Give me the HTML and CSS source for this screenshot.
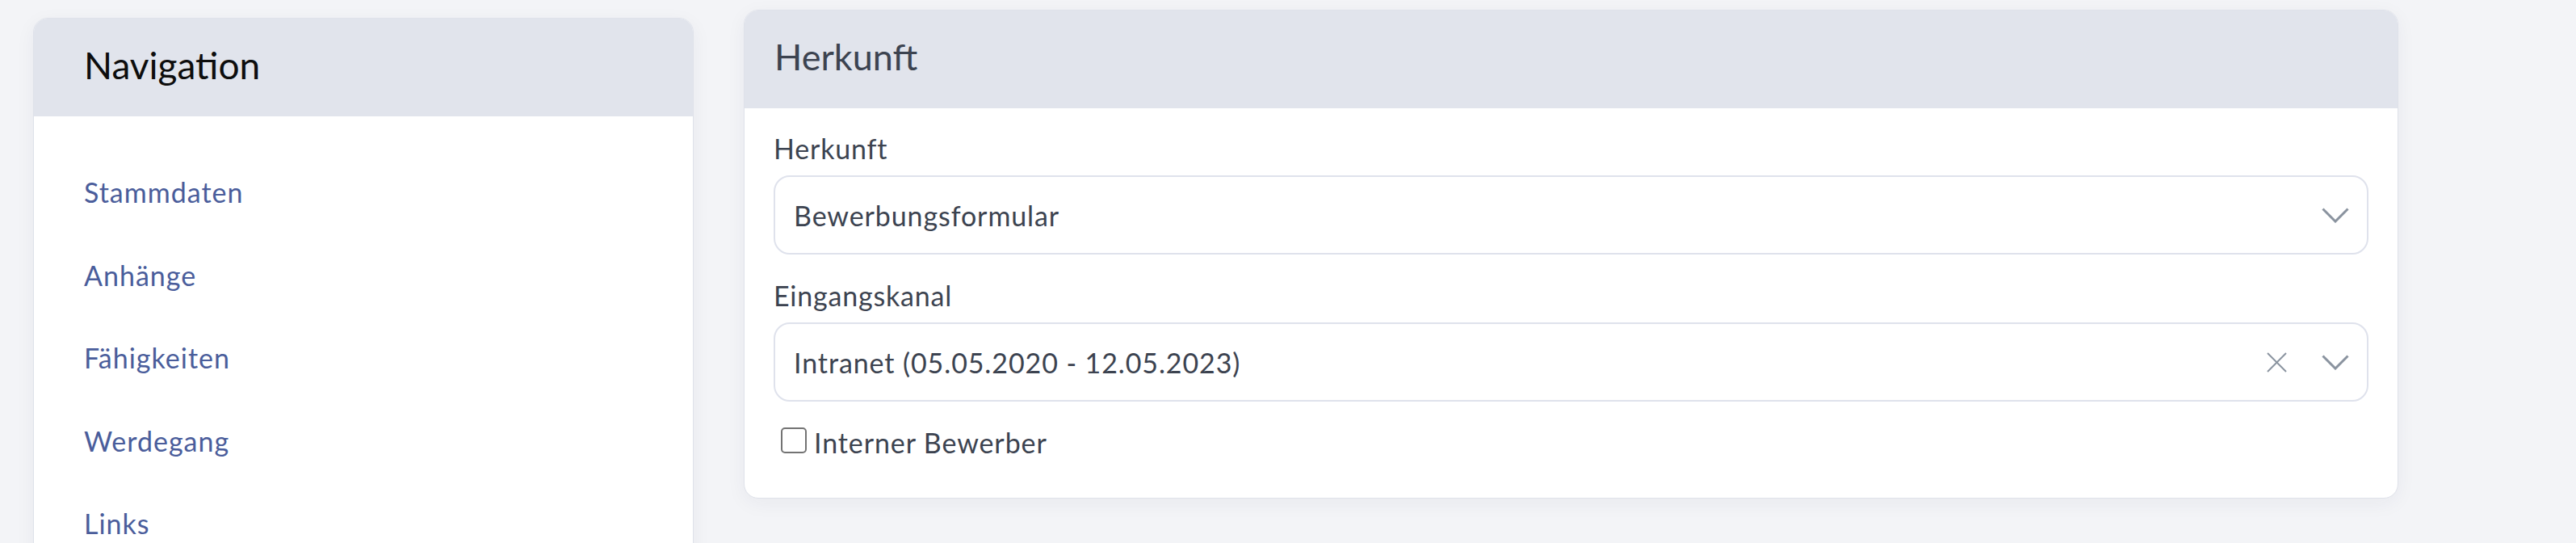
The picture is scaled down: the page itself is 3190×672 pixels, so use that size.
FILE: index.html
```html
<!DOCTYPE html>
<html lang="de">
<head>
<meta charset="utf-8"/>
<title>Bewerber – Herkunft</title>
<link rel="stylesheet" href="styles.css">
</head>
<body>
<div class="page">
  <aside class="card nav-card">
    <div class="card-header">
      <h2 class="card-title nav-title">Navigation</h2>
    </div>
    <nav class="nav-list">
      <a href="#stammdaten">Stammdaten</a>
      <a href="#anhaenge">Anhänge</a>
      <a href="#faehigkeiten">Fähigkeiten</a>
      <a href="#werdegang">Werdegang</a>
      <a href="#links">Links</a>
    </nav>
  </aside>

  <section class="card main-card">
    <div class="card-header">
      <h2 class="card-title">Herkunft</h2>
    </div>
    <div class="card-body">
      <label class="field-label">Herkunft</label>
      <div class="select">
        <span class="select-value">Bewerbungsformular</span>
        <span class="select-icons">
          <svg class="chevron" width="34" height="19" viewBox="0 0 34 19"><polyline points="1.5,1.5 17,17 32.5,1.5"/></svg>
        </span>
      </div>

      <label class="field-label">Eingangskanal</label>
      <div class="select">
        <span class="select-value">Intranet (05.05.2020 - 12.05.2023)</span>
        <span class="select-icons">
          <svg class="clear" width="25" height="25" viewBox="0 0 25 25"><line x1="1" y1="1" x2="24" y2="24"/><line x1="24" y1="1" x2="1" y2="24"/></svg>
          <svg class="chevron" width="34" height="19" viewBox="0 0 34 19"><polyline points="1.5,1.5 17,17 32.5,1.5"/></svg>
        </span>
      </div>

      <label class="check-row">
        <input type="checkbox" class="check"><span>Interner Bewerber</span>
      </label>
    </div>
  </section>
</div>
</body>
</html>
```

FILE: styles.css
```css
body {
  margin: 0;
  background: #f3f4f7;
  font-family: Lato, "Noto Sans", sans-serif;
  color: #3c4350;
}

.page {
  display: grid;
  grid-template-columns: 818px 2049px;
  column-gap: 62px;
  align-items: start;
  padding-left: 41px;
}

.card {
  background: white;
  border: 1px solid #dfe2ea;
  border-radius: 18px;
  overflow: hidden;
  box-shadow: 0 6px 24px rgba(30, 40, 70, 0.05);
}

.nav-card {
  margin-top: 22px;
}

.main-card {
  margin-top: 12px;
}

.card-header {
  background: #e1e4ec;
  padding: 30px 37px 36px;
}

.card-title {
  margin: 0;
  font-size: 45px;
  font-weight: 400;
  line-height: 55px;
  color: #3c4350;
}

.nav-card .card-header {
  padding-left: 62px;
}

.nav-title {
  color: #0d0d0d;
  font-size: 46px;
}

.nav-list {
  display: flex;
  flex-direction: column;
  padding: 42px 62px 0;
}

.nav-list a {
  color: #4a5d9b;
  text-decoration: none;
  font-size: 34px;
  line-height: 41px;
  letter-spacing: 1px;
  padding: 31px 0 30.5px;
}

.card-body {
  padding: 29px 36px 48px;
}

.field-label {
  display: block;
  font-size: 34px;
  line-height: 41px;
  letter-spacing: 0.8px;
  margin-bottom: 13px;
}

.select {
  display: flex;
  align-items: center;
  height: 98px;
  box-sizing: border-box;
  border: 2px solid #dfe2ec;
  border-radius: 20px;
  padding: 0 22px 0 23px;
  margin-bottom: 30px;
  font-size: 34px;
  line-height: 41px;
  letter-spacing: 0.9px;
}

.select-value {
  flex: 1;
}

.select-icons {
  display: flex;
  align-items: center;
  gap: 43px;
}

.select svg {
  fill: none;
  stroke: #8a939f;
}

.chevron {
  stroke-width: 3;
}

.clear {
  stroke-width: 2;
}

.check-row {
  display: block;
  margin-top: 11px;
  font-size: 34px;
  line-height: 41px;
  letter-spacing: 0.9px;
}

.check {
  appearance: none;
  width: 32px;
  height: 32px;
  margin: 0 9px 0 9px;
  border: 2px solid #737373;
  border-radius: 5px;
  background: white;
  vertical-align: baseline;
  box-sizing: border-box;
}
```
